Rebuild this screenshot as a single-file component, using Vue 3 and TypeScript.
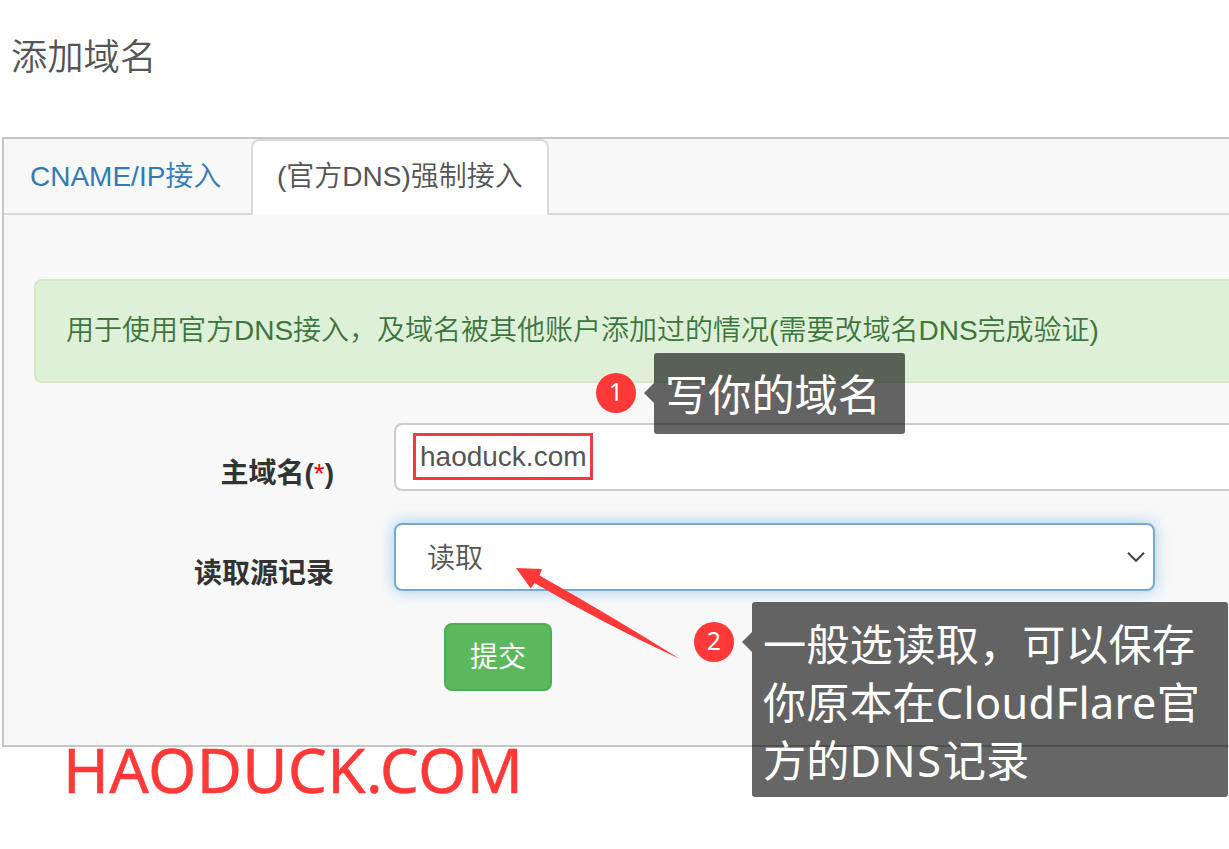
<script setup lang="ts">
import { ref } from 'vue'

interface Run {
  text: string
  latin?: boolean
}

const tabs: string[] = ['CNAME/IP接入', '(官方DNS)强制接入']
const activeTab = ref(1)
const domain = ref('haoduck.com')
const callout: Run[][] = [
  [{ text: '一般选读取，可以保存' }],
  [{ text: '你原本在' }, { text: 'CloudFlare', latin: true }, { text: '官' }],
  [{ text: '方的' }, { text: 'DNS', latin: true }, { text: '记录' }],
]
</script>

<template>
  <div class="page">
    <h1 class="title">添加域名</h1>

    <section class="panel">
      <nav class="tabs">
        <a
          v-for="(tab, i) in tabs"
          :key="tab"
          class="tab"
          :class="{ active: i === activeTab }"
          @click="activeTab = i"
        ><span>{{ tab }}</span></a>
      </nav>

      <div class="alert">用于使用官方DNS接入，及域名被其他账户添加过的情况(需要改域名DNS完成验证)</div>

      <div class="row">
        <label class="label">主域名(<span class="star">*</span>)</label>
        <div class="field wide"><span class="value">{{ domain }}</span></div>
      </div>
      <div class="row">
        <label class="label">读取源记录</label>
        <div class="field select">
          <span class="option">读取</span>
          <svg class="chevron" width="20" height="12" viewBox="0 0 20 12">
            <path d="M2 1.8 L10 9.8 L18 1.8" fill="none" stroke="#444" stroke-width="2" />
          </svg>
        </div>
      </div>
      <button class="submit">提交</button>
    </section>

    <div class="highlight"></div>
    <svg class="arrow" width="170" height="96" viewBox="0 0 170 96">
      <path d="M4 3 L30 4 L27.5 10.5 Q96 49 168 94 Q90 58 22.5 18 L18.8 23.5 Z" fill="#ff3838" />
    </svg>

    <div class="badge one"><span>1</span></div>
    <div class="tip first"><div class="line">写你的域名</div></div>
    <div class="badge two"><span>2</span></div>
    <div class="tip second">
      <div v-for="(line, i) in callout" :key="i" class="line"><span
        v-for="run in line"
        :key="run.text"
        :class="{ latin: run.latin }"
      >{{ run.text }}</span></div>
    </div>
    <div class="watermark">HAODUCK.COM</div>
  </div>
</template>

<style>
body {
  margin: 0;
  background: #fff;
  overflow: hidden;
}
</style>

<style scoped>
.page {
  position: relative;
  width: 1229px;
  height: 849px;
  overflow: hidden;
  box-sizing: border-box;
  padding: 34px 0 0 2px;
  background: #fff;
  color: #555;
  font-family: "Liberation Sans", "Noto Sans CJK SC", sans-serif;
  font-size: 28px;
  font-weight: 350;
}
.title {
  margin: 0 0 55px 9px;
  height: 48px;
  line-height: 48px;
  font-size: 36.3px;
  font-weight: 350;
}
.panel {
  box-sizing: border-box;
  width: 1260px;
  height: 610px;
  border: 2px solid #c6c6c6;
  background: #f8f8f8;
}
.tabs {
  display: flex;
  height: 74px;
  border-bottom: 2px solid #d9d9d9;
}
.tab {
  box-sizing: border-box;
  height: 74px;
  padding: 0 0 0 26px;
  width: 247px;
  line-height: 76px;
  color: #337ab7;
  white-space: nowrap;
  cursor: pointer;
}
.tab.active {
  height: 76px;
  width: 298px;
  padding-left: 24px;
  border: 2px solid #dadada;
  border-bottom: 0;
  border-radius: 8px 8px 0 0;
  background: #fff;
  color: #555;
  line-height: 72px;
}
.alert {
  box-sizing: border-box;
  height: 104px;
  margin: 64px 0 40px 30px;
  padding-left: 30px;
  border: 2px solid #d6e9c6;
  border-radius: 8px;
  background: #dff0d8;
  color: #3c763d;
  line-height: 100px;
  white-space: nowrap;
}
.row {
  display: flex;
  height: 68px;
  margin-bottom: 32px;
}
.label {
  flex: none;
  width: 330px;
  margin-right: 60px;
  text-align: right;
  font-weight: 700;
  color: #333;
  line-height: 101px;
}
.star {
  color: #f00;
  font-weight: 400;
}
.field {
  display: flex;
  flex: none;
  align-items: center;
  justify-content: space-between;
  box-sizing: border-box;
  height: 68px;
  border: 2px solid #ccc;
  border-radius: 8px;
  background: #fff;
}
.wide {
  width: 900px;
  padding-left: 24px;
}
.select {
  width: 761px;
  padding: 0 7px 0 31px;
  border-color: #78a8d2;
  box-shadow: 0 0 16px rgba(102, 175, 233, 0.6);
}
.option {
  padding-bottom: 2px;
}
.submit {
  display: block;
  width: 108px;
  height: 68px;
  margin-left: 440px;
  padding: 0 0 4px;
  border: 2px solid #4cae4c;
  border-radius: 8px;
  background: #5cb85c;
  color: #fff;
  font: inherit;
  font-weight: 400;
}
.highlight {
  position: absolute;
  left: 413px;
  top: 433px;
  width: 174px;
  height: 41px;
  border: 3px solid #f03c40;
}
.arrow {
  position: absolute;
  left: 512px;
  top: 565px;
}
.badge {
  position: absolute;
  width: 40px;
  height: 40px;
  border-radius: 50%;
  background: #ff3838;
  color: #fff;
  font: 25px/36px "Noto Sans", sans-serif;
  text-align: center;
}
.one {
  left: 596px;
  top: 373px;
}
.two {
  left: 694px;
  top: 622px;
}
.tip {
  position: absolute;
  box-sizing: border-box;
  border-radius: 3px;
  background: rgba(0, 0, 0, 0.6);
  color: #fff;
  font: 43.2px/58px "Noto Sans", "Noto Sans CJK SC", sans-serif;
  white-space: nowrap;
}
.tip::before {
  content: "";
  position: absolute;
  left: -10px;
  top: 30px;
  border: solid transparent;
  border-width: 10px 10px 10px 0;
  border-right-color: rgba(0, 0, 0, 0.6);
}
.line {
  height: 58px;
}
.latin {
  letter-spacing: 0.4px;
}
.line:nth-child(3) .latin {
  letter-spacing: 1.8px;
}
.first {
  left: 654px;
  top: 353px;
  width: 251px;
  height: 81px;
  padding: 13px 0 0 11px;
}
.second {
  left: 752px;
  top: 602px;
  width: 476px;
  height: 195px;
  padding: 14px 0 0 11px;
}
.watermark {
  position: absolute;
  left: 63px;
  top: 729px;
  color: #ff3838;
  font: 62px/80px "Noto Sans", sans-serif;
  letter-spacing: 0.3px;
  -webkit-text-stroke: 0.5px #ff3838;
  white-space: nowrap;
}
</style>
